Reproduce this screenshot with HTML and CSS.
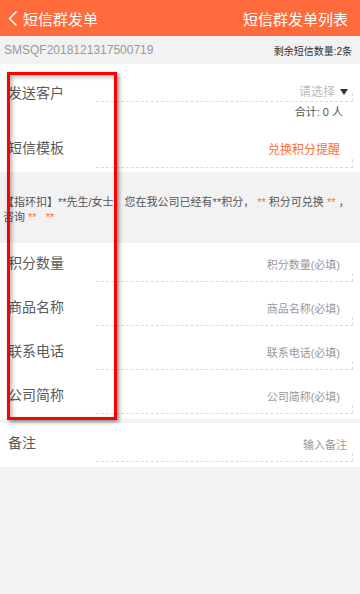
FILE: index.html
```html
<!DOCTYPE html>
<html lang="zh-CN">
<head>
<meta charset="utf-8">
<title>短信群发单</title>
<link rel="stylesheet" href="styles.css">
</head>
<body>
<div class="header">
  <div class="back">
    <svg class="chev" width="9" height="15" viewBox="0 0 9 15"><polyline points="8,1 1.5,7.5 8,14" fill="none" stroke="#fff" stroke-width="1.5" stroke-linecap="round" stroke-linejoin="round"/></svg>
    <span>短信群发单</span>
  </div>
  <div class="h-right">短信群发单列表</div>
</div>
<div class="info">
  <span class="code">SMSQF2018121317500719</span>
  <span class="remain">剩余短信数量:2条</span>
</div>
<div class="sec sec1">
  <div class="row r-customer">
    <div class="label">发送客户</div>
    <div class="field f-select"><span class="ph-light">请选择</span><svg class="tri" width="8" height="6" viewBox="0 0 8 6"><polygon points="0,0 8,0 4,6" fill="#333"/></svg></div>
  </div>
  <div class="total">合计: 0 人</div>
  <div class="row r-template">
    <div class="label">短信模板</div>
    <div class="field f-link">兑换积分提醒</div>
  </div>
</div>
<div class="template">【指环扣】**先生/女士，您在我公司已经有**积分，&nbsp;<span class="red">**</span>&nbsp;积分可兑换&nbsp;<span class="red">**</span>&nbsp;，<br>咨询&nbsp;<span class="red">**</span>&nbsp;&nbsp;&nbsp;<span class="red">**</span></div>
<div class="sec sec2">
  <div class="row frow"><div class="label">积分数量</div><div class="field f-input">积分数量(必填)</div></div>
  <div class="row frow"><div class="label">商品名称</div><div class="field f-input">商品名称(必填)</div></div>
  <div class="row frow"><div class="label">联系电话</div><div class="field f-input">联系电话(必填)</div></div>
  <div class="row frow"><div class="label">公司简称</div><div class="field f-input">公司简称(必填)</div></div>
</div>
<div class="sec sec3">
  <div class="row frow"><div class="label">备注</div><div class="field f-input f-note">输入备注</div></div>
</div>
<div class="mark"></div>
</body>
</html>
```
FILE: styles.css
```css
* { box-sizing: border-box; }
html, body { margin: 0; padding: 0; }
body {
  background: #f2f2f2;
  font-family: "Liberation Sans", "Noto Sans CJK SC", sans-serif;
  width: 360px;
  min-height: 594px;
}
.header {
  height: 36px;
  background: #ff6b3d;
  color: #fff;
  font-size: 15px;
  display: flex;
  align-items: center;
  justify-content: space-between;
  padding: 0 12px 0 8px;
}
.back { display: flex; align-items: center; gap: 6px; }
.chev { display: block; }
.info {
  height: 28px;
  display: flex;
  align-items: center;
  justify-content: space-between;
  padding: 0 8px 0 4px;
}
.code { font-size: 12px; color: #999; }
.remain { font-size: 10px; color: #333; }
.sec { background: #fff; }
.row { display: flex; }
.label {
  width: 96px;
  flex: none;
  padding-left: 8px;
  font-size: 14px;
  line-height: 20px;
  color: #5a5a5a;
  align-self: flex-start;
}
.field {
  flex: 1;
  margin-right: 7px;
  border-bottom: 1px dashed #dcdcdc;
  position: relative;
  display: flex;
  justify-content: flex-end;
  align-self: flex-start;
}
.field::after {
  content: "";
  position: absolute;
  right: 0;
  bottom: -1px;
  height: 9px;
  border-right: 1px dashed #dcdcdc;
}
.sec1 { padding-bottom: 4px; }
.r-customer { padding-top: 19px; }
.f-select {
  height: 19px;
  align-items: center;
  padding-right: 5px;
  gap: 5px;
}
.ph-light { font-size: 12px; color: #bbb; line-height: 16px; }
.tri { display: block; }
.total {
  margin-top: 2px;
  text-align: right;
  padding-right: 17px;
  font-size: 11px;
  line-height: 14px;
  color: #555;
}
.r-template { padding-top: 19px; }
.f-link {
  height: 30px;
  align-items: flex-start;
  padding-top: 4px;
  padding-right: 13px;
  font-size: 12px;
  line-height: 16px;
  color: #ff6b3d;
}
.template {
  padding: 23px 0 18px 3px;
  font-size: 11px;
  line-height: 15px;
  color: #555;
  white-space: nowrap;
  overflow: hidden;
}
.red { color: #ff6b3d; }
.frow { height: 44px; padding-top: 10px; }
.f-input {
  height: 29px;
  align-items: center;
  padding-bottom: 6px;
  padding-right: 13px;
  font-size: 11px;
  color: #999;
}
.sec3 { margin-top: 4px; }
.f-note { padding-right: 6px; }
.mark {
  position: absolute;
  left: 7px;
  top: 72px;
  width: 110px;
  height: 348px;
  border: 3px solid #f00;
  box-shadow: 2px 2px 4px rgba(0,0,0,0.45), inset 2px 2px 4px rgba(0,0,0,0.3);
  pointer-events: none;
}
```
